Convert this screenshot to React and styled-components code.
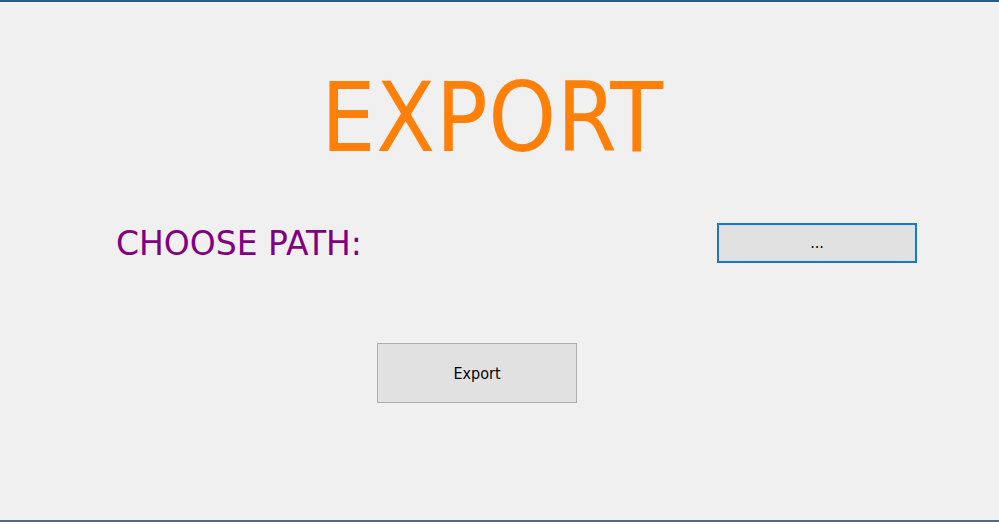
import React from "react";
import styled, { createGlobalStyle } from "styled-components";

const GlobalStyle = createGlobalStyle`
  html, body {
    margin: 0;
    padding: 0;
    background: #f0f0f0;
  }
`;

const Window = styled.div`
  box-sizing: border-box;
  width: 999px;
  height: 522px;
  background: #f0f0f0;
  border-top: 2px solid #2b5a86;
  border-bottom: 2px solid #4f6b82;
  display: flex;
  flex-direction: column;
  font-family: "DejaVu Sans Condensed", "DejaVu Sans", sans-serif;
`;

const Title = styled.h1`
  margin: 68px 0 0 321px;
  font-family: "DejaVu Sans Condensed", "DejaVu Sans", sans-serif;
  font-weight: normal;
  font-size: 96px;
  line-height: 96px;
  letter-spacing: 0.5px;
  color: #ff8009;
`;

const PathRow = styled.div`
  display: flex;
  align-items: center;
  justify-content: space-between;
  margin-top: 57px;
  padding: 0 82px 0 116px;
  height: 39px;
`;

const Label = styled.span`
  font-family: "DejaVu Sans", sans-serif;
  font-size: 33px;
  margin-top: 2px;
  color: #800080;
`;

const Button = styled.button`
  box-sizing: border-box;
  width: 200px;
  height: ${(p) => p.$height}px;
  background: #e1e1e1;
  border: ${(p) => (p.$focused ? "2px solid #1d78c1" : "1px solid #adadad")};
  box-shadow: ${(p) => (p.$focused ? "inset 0 0 0 1px #cce4f7" : "none")};
  font-family: Tahoma, "DejaVu Sans Condensed", "DejaVu Sans", sans-serif;
  font-size: 16px;
  color: #000;
  padding: 0;
  cursor: pointer;
`;

const ExportButton = styled(Button)`
  margin: 81px 0 0 377px;
`;

export default function App() {
  return (
    <>
      <GlobalStyle />
      <Window>
        <Title>EXPORT</Title>
        <PathRow>
          <Label>CHOOSE PATH:</Label>
          <Button $focused $height={40}>...</Button>
        </PathRow>
        <ExportButton $height={60}>Export</ExportButton>
      </Window>
    </>
  );
}
